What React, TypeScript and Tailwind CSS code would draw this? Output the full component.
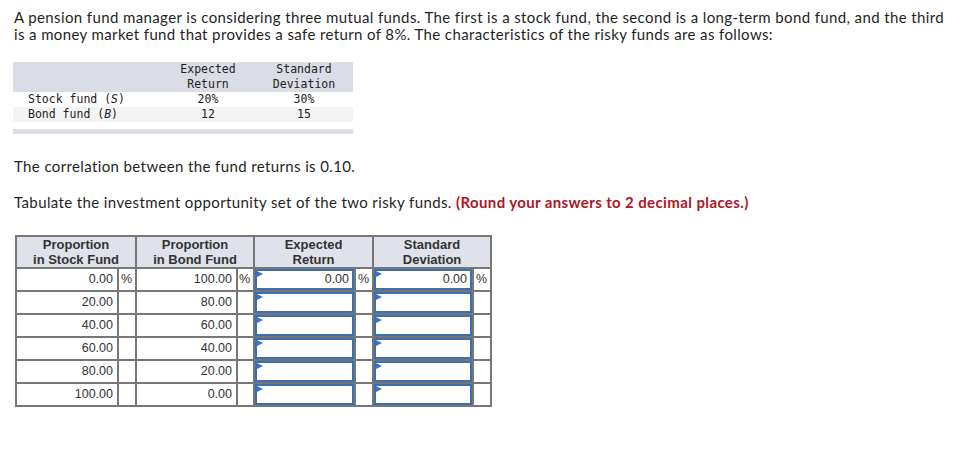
const rows = [
  { s: "0.00", b: "100.00", first: true },
  { s: "20.00", b: "80.00" },
  { s: "40.00", b: "60.00" },
  { s: "60.00", b: "40.00" },
  { s: "80.00", b: "20.00" },
  { s: "100.00", b: "0.00" },
];

function Flag() {
  return (
    <svg className="absolute left-[0px] top-[0px]" width="6" height="6" viewBox="0 0 6 6">
      <path d="M0 0 L6 3 L0 6 Z" fill="#3b75c0" />
    </svg>
  );
}

function InputCell({ value }: { value?: string }) {
  return (
    <td className="border-2 border-[#777] p-0 h-[23px]">
      <div className="relative h-[21px] border-2 border-[#3b6fb0] bg-white text-right pr-[3px] leading-[17px]">
        <Flag />
        {value}
      </div>
    </td>
  );
}

export default function App() {
  return (
    <div className="w-[968px] h-[463px] bg-white text-[#1f1f1f] font-['Lato',sans-serif] tracking-[0.38px]">
      <p className="px-[14px] pt-[9px] text-[15px] leading-[17px]">
        A pension fund manager is considering three mutual funds. The first is a stock fund, the second is a long-term bond fund, and the third is a money market fund that provides a safe return of 8%. The characteristics of the risky funds are as follows:
      </p>

      {/* data table */}
      <div className="ml-[13px] mt-[19px] w-[340px] font-['DejaVu_Sans_Mono',monospace] text-[11.5px] leading-[15px] tracking-normal text-[#222]">
        <div className="flex bg-[#dadde6]">
          <div className="w-[148px]" />
          <div className="w-[94px] text-center">Expected<br />Return</div>
          <div className="w-[98px] text-center">Standard<br />Deviation</div>
        </div>
        <div className="flex bg-white">
          <div className="w-[148px] pl-[15px]">Stock fund (<i>S</i>)</div>
          <div className="w-[94px] text-center">20%</div>
          <div className="w-[98px] text-center">30%</div>
        </div>
        <div className="flex bg-[#f4f4f4]">
          <div className="w-[148px] pl-[15px]">Bond fund (<i>B</i>)</div>
          <div className="w-[94px] text-center">12</div>
          <div className="w-[98px] text-center">15</div>
        </div>
        <div className="mt-[7px] h-[5px] bg-[#dadde6]" />
      </div>

      <p className="px-[14px] mt-[24px] text-[15px] leading-[17px]">
        The correlation between the fund returns is 0.10.
      </p>
      <p className="px-[14px] mt-[19px] text-[15px] leading-[17px]">
        Tabulate the investment opportunity set of the two risky funds.{" "}
        <b className="text-[#b0141f]">(Round your answers to 2 decimal places.)</b>
      </p>

      {/* answer table */}
      <table className="ml-[15px] mt-[24px] w-[475px] table-fixed border-collapse font-['Liberation_Sans',Arial,sans-serif] text-[12.5px] tracking-normal text-[#333]">
        <colgroup>
          <col className="w-[102px]" />
          <col className="w-[18px]" />
          <col className="w-[101px]" />
          <col className="w-[17px]" />
          <col className="w-[101px]" />
          <col className="w-[18px]" />
          <col className="w-[100px]" />
          <col className="w-[18px]" />
        </colgroup>
        <thead>
          <tr className="bg-[#dfe2ea] leading-[15px] text-[13px]">
            <th colSpan={2} className="border-2 border-[#777] h-[32px] font-bold">Proportion<br />in Stock Fund</th>
            <th colSpan={2} className="border-2 border-[#777] font-bold">Proportion<br />in Bond Fund</th>
            <th colSpan={2} className="border-2 border-[#777] font-bold">Expected<br />Return</th>
            <th colSpan={2} className="border-2 border-[#777] font-bold">Standard<br />Deviation</th>
          </tr>
        </thead>
        <tbody>
          {rows.map((r, i) => (
            <tr key={i}>
              <td className="border-2 border-[#777] h-[23px] text-right pr-[4px]">{r.s}</td>
              <td className="border-2 border-[#777] pl-[2px]">{r.first ? "%" : ""}</td>
              <td className="border-2 border-[#777] text-right pr-[4px]">{r.b}</td>
              <td className="border-2 border-[#777] pl-[1px]">{r.first ? "%" : ""}</td>
              <InputCell value={r.first ? "0.00" : undefined} />
              <td className="border-2 border-[#777] pl-[2px]">{r.first ? "%" : ""}</td>
              <InputCell value={r.first ? "0.00" : undefined} />
              <td className="border-2 border-[#777] pl-[2px]">{r.first ? "%" : ""}</td>
            </tr>
          ))}
        </tbody>
      </table>
    </div>
  );
}
